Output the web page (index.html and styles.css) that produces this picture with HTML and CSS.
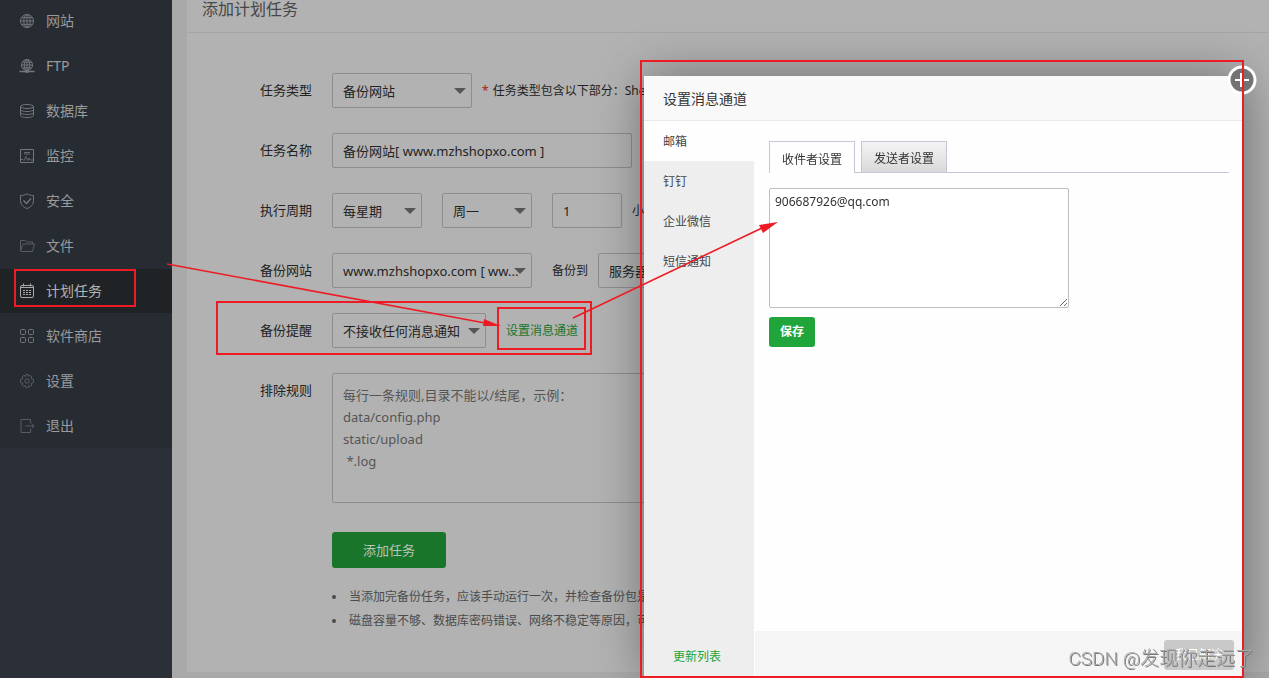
FILE: index.html
```html
<!DOCTYPE html>
<html lang="zh-CN">
<head>
<meta charset="utf-8">
<title>计划任务</title>
<link rel="stylesheet" href="styles.css">
</head>
<body>
<div class="app">
  <nav class="sidebar">
    <ul class="menu">
      <li><a href="#"><svg class="icon" viewBox="0 0 16 16"><circle cx="8" cy="8" r="6.500"/><ellipse cx="8" cy="8" rx="3.200" ry="6.500"/><path d="M8 1.500v13M1.500 8h13M2.500 4.700h11M2.500 11.300h11"/></svg>网站</a></li>
      <li><a href="#"><svg class="icon" viewBox="0 0 16 16"><circle cx="8" cy="7" r="5.500"/><ellipse cx="8" cy="7" rx="2.700" ry="5.500"/><path d="M8 1.500v11M2.500 7h11M3.500 4.200h9M3.500 9.800h9"/><path d="M0.500 13.500h15M6 14h4" stroke-width="1.600"/></svg>FTP</a></li>
      <li><a href="#"><svg class="icon" viewBox="0 0 16 16"><ellipse cx="8" cy="3.500" rx="6.500" ry="2"/><path d="M1.500 3.500v9c0 1.200 2.900 2 6.500 2s6.500-.8 6.500-2v-9M1.500 6.500c0 1.200 2.900 2 6.500 2s6.500-.8 6.500-2M1.500 9.500c0 1.200 2.900 2 6.500 2s6.500-.8 6.500-2"/></svg>数据库</a></li>
      <li><a href="#"><svg class="icon" viewBox="0 0 16 16"><path d="M1.500 1.500h13v13h-13z"/><path d="M5 4.500h6M5 6h6M2 11.500h2l1 1 2-4 1.500 4L10 10l1 2h3" stroke-width=".8"/></svg>监控</a></li>
      <li><a href="#"><svg class="icon" viewBox="0 0 16 16"><path d="M8 .8c2 1.200 4 1.700 6.500 1.700v5c0 4-2.500 6.500-6.500 8-4-1.500-6.500-4-6.500-8v-5C4 2.500 6 2 8 .8z"/><path d="M4.500 7.500l3 3 4.500-5" stroke-width="1.400"/></svg>安全</a></li>
      <li><a href="#"><svg class="icon dim" viewBox="0 0 16 16"><path d="M1.500 13V2.500h4.500L7.500 4h6v2M1.500 13l2.500-7h11.500l-2 7.500H2z"/></svg>文件</a></li>
      <li><a class="active" href="#"><svg class="icon" viewBox="0 0 16 16"><rect x="1.500" y="2.500" width="13" height="12" rx="1.500"/><path d="M4.500 .5v3M11.500 .5v3M2 4.500h12"/><path d="M4 7.500h8M4 9.500h8M4 11.500h8" stroke-dasharray="2 1"/></svg>计划任务</a></li>
      <li><a href="#"><svg class="icon" viewBox="0 0 16 16"><rect x="1.500" y="1.500" width="5" height="5" rx="1"/><rect x="9.500" y="1.500" width="5" height="5" rx="1"/><rect x="1.500" y="9.500" width="5" height="5" rx="1"/><rect x="9.500" y="9.500" width="5" height="5" rx="1"/></svg>软件商店</a></li>
      <li><a href="#"><svg class="icon dim" viewBox="0 0 16 16"><circle cx="8" cy="8" r="2.200"/><path d="M6.900 1.500h2.200l.5 1.800 1.700-.9 1.600 1.500-.9 1.700 2.500.8v3.200l-2.500.8.9 1.600-1.600 1.600-1.700-.9-.5 1.900H6.900l-.5-1.900-1.700.9-1.600-1.600.9-1.600-2.500-.8V6.400L4 5.600l-.9-1.700 1.600-1.500 1.700.9z"/></svg>设置</a></li>
      <li><a href="#"><svg class="icon dim" viewBox="0 0 16 16"><path d="M11.500 5V1.500H2v13h9.500V11M6.500 8H15M12.500 5.500L15 8l-2.500 2.500"/></svg>退出</a></li>
    </ul>
  </nav>

  <main class="main">
    <section class="card">
      <h1 class="card-title">添加计划任务</h1>
      <form class="form">
        <div class="row">
          <label class="label" for="type">任务类型</label>
          <span class="select w140"><select id="type"><option>备份网站</option></select></span>
          <span class="note"><b>*</b>任务类型包含以下部分：Shell脚本</span>
        </div>
        <div class="row">
          <label class="label" for="name">任务名称</label>
          <input class="field w300" id="name" type="text" value="备份网站[ www.mzhshopxo.com ]">
        </div>
        <div class="row">
          <label class="label" for="cycle">执行周期</label>
          <span class="select w90"><select id="cycle"><option>每星期</option></select></span>
          <span class="select w90 gap"><select aria-label="星期"><option>周一</option></select></span>
          <input class="field w70 gap" type="text" value="1" aria-label="小时">
          <span class="unit">小时</span>
        </div>
        <div class="row">
          <label class="label" for="site">备份网站</label>
          <span class="select w200"><select id="site"><option>www.mzhshopxo.com [ ww...</option></select></span>
          <label class="small gap" for="target">备份到</label>
          <span class="select w140 near"><select id="target"><option>服务器磁盘</option></select></span>
        </div>
        <div class="row">
          <label class="label" for="notice">备份提醒</label>
          <span class="select w154"><select id="notice"><option>不接收任何消息通知</option></select></span>
          <a class="link gap" href="#">设置消息通道</a>
        </div>
        <div class="row tall">
          <label class="label" for="rules">排除规则</label>
          <textarea class="rules" id="rules" placeholder="每行一条规则,目录不能以/结尾，示例：&#10;data/config.php&#10;static/upload&#10; *.log"></textarea>
        </div>
        <button class="submit" type="button">添加任务</button>
        <ul class="tips">
          <li>当添加完备份任务，应该手动运行一次，并检查备份包是否完整</li>
          <li>磁盘容量不够、数据库密码错误、网络不稳定等原因，可能导致数据备份不完整</li>
        </ul>
      </form>
    </section>
  </main>
</div>

<div class="modal" role="dialog" aria-labelledby="modal-title">
  <h2 class="modal-title" id="modal-title">设置消息通道</h2>
  <div class="modal-body">
    <nav class="channels">
      <a class="current" href="#">邮箱</a>
      <a href="#">钉钉</a>
      <a href="#">企业微信</a>
      <a href="#">短信通知</a>
      <a class="refresh" href="#">更新列表</a>
    </nav>
    <div class="pane">
      <div class="pane-content">
        <div class="tabs">
          <button class="tab on" type="button">收件者设置</button>
          <button class="tab" type="button">发送者设置</button>
        </div>
        <textarea class="mails" aria-label="收件者">906687926@qq.com</textarea>
        <button class="save" type="button">保存</button>
      </div>
      <footer class="pane-footer"><button class="done" type="button">我已解决</button></footer>
    </div>
  </div>
  <button class="close" type="button" aria-label="关闭"><svg viewBox="0 0 30 30"><circle cx="15" cy="15" r="13" fill="#737373" stroke="#fff" stroke-width="3"/><path d="M8 15h14M14 8v14" stroke="#fff" stroke-width="2"/></svg></button>
</div>

<svg class="marks" width="1269" height="678" viewBox="0 0 1269 678">
  <g fill="none" stroke="#ed1c24" stroke-width="2">
    <rect x="15" y="270" width="120" height="36"/>
    <rect x="217" y="302" width="374" height="52"/>
    <rect x="498" y="308" width="87" height="41"/>
    <rect x="641" y="61" width="602" height="616"/>
    <path d="M167 264L485 323M573 318L762 228" stroke-width="1.600"/>
  </g>
  <path d="M501 326l-17-7-1 7zM778 222l-19 3 4 8z" fill="#ed1c24"/>
</svg>
<div class="watermark">CSDN @发现你走远了</div>
</body>
</html>
```
FILE: styles.css
```css
* { box-sizing: border-box; }
html, body { height: 100%; }
body {
  margin: 0;
  overflow: hidden;
  background: #a9a9a9;
  color: #232323;
  font: 13px/20px "Noto Sans", "Noto Sans CJK SC", sans-serif;
}
button, input, select, textarea { font: inherit; color: inherit; margin: 0; }
a { text-decoration: none; }
ul { list-style: none; margin: 0; padding: 0; }

.app { display: flex; height: 100%; }
.sidebar { flex: 0 0 172px; background: #2b2f38; }
.menu { display: flex; flex-direction: column; gap: 1px; margin-top: -1px; background: #272b32; }
.menu a {
  display: flex;
  align-items: center;
  gap: 11px;
  height: 44px;
  padding-left: 19px;
  color: #999b9d;
  font-size: 14px;
}
.menu .active { background: #202326; color: #b3b3b3; }
.icon { width: 16px; height: 16px; fill: none; stroke: #75787b; stroke-width: 1; }
.icon.dim { stroke: #595d62; }
.active .icon { stroke: #a8a8a8; }

.main { flex: 1; min-width: 0; padding-left: 15px; }
.card { background: #b2b2b2; padding-bottom: 39px; }
.card-title {
  height: 33px;
  margin: 0;
  padding: 0 15px;
  border-bottom: 1px solid #a5a5a5;
  color: #474747;
  font-size: 16px;
  font-weight: 400;
  line-height: 18px;
}
.form { padding: 40px 0 0 73px; white-space: nowrap; overflow: hidden; }
.row { display: flex; align-items: center; height: 35px; margin-bottom: 25px; }
.row.tall { align-items: flex-start; height: 130px; margin-bottom: 29px; }
.label { flex: none; width: 52px; margin-right: 20px; line-height: 35px; }
.select { position: relative; flex: none; }
.select::after {
  content: "";
  position: absolute;
  right: 6px;
  top: 15px;
  border: 6px solid transparent;
  border-top-color: #555;
  border-bottom: 0;
  pointer-events: none;
}
.select select, .field, .rules {
  display: block;
  width: 100%;
  height: 35px;
  padding: 0 10px;
  border: 1px solid #8d8d8d;
  border-radius: 2px;
  background: none;
  appearance: none;
  outline: 0;
}
.select select { padding-right: 0; }
.field { flex: none; }
.w70, .field.w70 { width: 70px; }
.w90 { width: 90px; }
.w140 { width: 140px; }
.w154 { width: 154px; }
.w200 { width: 200px; }
.field.w300 { width: 300px; }
.gap { margin-left: 20px; }
.near { margin-left: 10px; }
.note, .small, .unit, .link { font-size: 12px; }
.note, .unit { margin-left: 10px; }
.note b { margin-right: 4px; color: #b01818; font-weight: 400; }
.link { color: #18752a; }
.rules { width: 500px; height: 130px; padding: 10px; line-height: 22px; resize: none; }
.rules::placeholder { color: #555; opacity: 1; }
.submit {
  display: block;
  width: 114px;
  height: 36px;
  margin-left: 72px;
  border: 0;
  border-radius: 3px;
  background: #18752a;
  color: #b8c4ba;
}
.tips { margin: 17px 0 0 72px; color: #4b4b4b; font-size: 12px; line-height: 24px; }
.tips li { display: flex; align-items: center; gap: 13px; }
.tips li::before { content: ""; width: 4px; height: 4px; border-radius: 50%; background: #4b4b4b; }

.modal {
  position: fixed;
  top: 76px;
  right: 25px;
  bottom: 0;
  width: 600px;
  display: flex;
  flex-direction: column;
  border-radius: 2px;
  background: #fefefe;
  color: #333;
  box-shadow: 1px 1px 50px rgba(0, 0, 0, .4);
}
.modal-title {
  height: 45px;
  margin: 0;
  padding-left: 19px;
  border-bottom: 1px solid #e9e9e9;
  background: #f9f9f9;
  font-size: 14px;
  font-weight: 400;
  line-height: 46px;
}
.modal-body { flex: 1; display: flex; min-height: 0; }
.channels { flex: 0 0 110px; display: flex; flex-direction: column; background: #eee; }
.channels a { height: 40px; padding-left: 19px; color: #444; font-size: 12px; line-height: 42px; }
.channels .current { background: #fefefe; }
.channels .refresh { margin-top: auto; padding-left: 29px; margin-bottom: 2px; color: #20a53a; }
.pane { flex: 1; display: flex; flex-direction: column; margin-left: 1px; }
.pane-content { flex: 1; padding: 20px 15px 0 14px; }
.tabs { display: flex; gap: 6px; height: 32px; border-bottom: 1px solid #c8c5d6; }
.tab {
  width: 86px;
  height: 31px;
  padding: 4px 0 0;
  border: 1px solid #c8c5d6;
  border-bottom: 0;
  background: linear-gradient(#f4f4f4, #d9d9d9);
  font-size: 12px;
}
.tab.on { height: 32px; background: #fefefe; }
.mails {
  display: block;
  width: 300px;
  height: 120px;
  margin: 15px 0 9px;
  padding: 3px 5px;
  border: 1px solid #bebebe;
  border-radius: 2px;
  background: #fff;
  font-size: 12px;
  outline: 0;
}
.save {
  width: 46px;
  height: 30px;
  padding: 0;
  border: 0;
  border-radius: 3px;
  background: #20a53a;
  color: #fff;
  font-size: 12px;
  font-weight: 700;
}
.pane-footer { height: 47px; padding: 9px 10px; background: #f5f5f5; text-align: right; }
.done {
  width: 70px;
  height: 30px;
  padding: 0;
  border: 0;
  border-radius: 3px;
  background: #c9c9c9;
  color: #fff;
  font-size: 12px;
}
.close { position: absolute; top: -11px; right: -13px; width: 30px; height: 30px; padding: 0; border: 0; background: none; }
.close svg { display: block; }

.marks { position: absolute; top: 0; left: 0; pointer-events: none; }
.watermark {
  position: fixed;
  right: 15px;
  bottom: 5px;
  color: #a9a9a9;
  font-family: Roboto, "Noto Sans CJK SC", sans-serif;
  font-size: 19px;
  font-weight: 300;
  line-height: 28px;
  text-shadow: 1px 1px 0 #777;
  pointer-events: none;
}
```
